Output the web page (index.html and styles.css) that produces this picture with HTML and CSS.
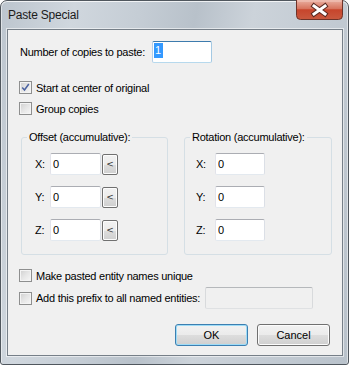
FILE: index.html
```html
<!DOCTYPE html>
<html lang="en">
<head>
    <meta charset="UTF-8">
    <title>Paste Special</title>
    <link rel="stylesheet" href="styles.css">
</head>
<body>
    <div class="window">
        <div class="titlebar">
            <span class="title">Paste Special</span>
            <div class="close">
                <svg width="47" height="20" viewBox="0 0 47 20">
                    <defs>
                        <linearGradient id="closegrad" x1="0" y1="0" x2="0" y2="1">
                            <stop offset="0" stop-color="#eab0a2"/>
                            <stop offset="0.45" stop-color="#d7735d"/>
                            <stop offset="0.5" stop-color="#c7452c"/>
                            <stop offset="1" stop-color="#c9593f"/>
                        </linearGradient>
                    </defs>
                    <path d="M0.5 0 V15.5 Q0.5 19.5 4.5 19.5 H42.5 Q46.5 19.5 46.5 15.5 V0" fill="url(#closegrad)" stroke="#6e3329"/>
                    <path d="M1.5 1 H45.5" stroke="#f3c9bf" stroke-width="1"/>
                    <path d="M18 6 L29 14 M29 6 L18 14" stroke="#5b2a22" stroke-width="5" stroke-linecap="square"/>
                    <path d="M18 6 L29 14 M29 6 L18 14" stroke="#ffffff" stroke-width="3" stroke-linecap="square"/>
                </svg>
            </div>
        </div>

        <div class="client">
            <div class="copies-row">
                <span class="copies-label">Number of copies to paste:</span>
                <div class="textbox copies"><span class="selected">1</span></div>
            </div>

            <div class="check-row first">
                <span class="checkbox">
                    <svg width="11" height="11" viewBox="0 0 11 11"><path d="M2.2 5.4 L4.5 8 L8.8 2" fill="none" stroke="#4c63a0" stroke-width="1.5"/></svg>
                </span>
                Start at center of original
            </div>
            <div class="check-row second">
                <span class="checkbox"></span>
                Group copies
            </div>

            <div class="groups">
                <div class="group offset">
                    <span class="group-title">Offset (accumulative):</span>
                    <div class="axis-row"><span class="axis">X:</span><input class="textbox axis-input" value="0"><button class="pick">&lt;</button></div>
                    <div class="axis-row"><span class="axis">Y:</span><input class="textbox axis-input" value="0"><button class="pick">&lt;</button></div>
                    <div class="axis-row"><span class="axis">Z:</span><input class="textbox axis-input" value="0"><button class="pick">&lt;</button></div>
                </div>
                <div class="group rotation">
                    <span class="group-title">Rotation (accumulative):</span>
                    <div class="axis-row"><span class="axis">X:</span><input class="textbox axis-input" value="0"></div>
                    <div class="axis-row"><span class="axis">Y:</span><input class="textbox axis-input" value="0"></div>
                    <div class="axis-row"><span class="axis">Z:</span><input class="textbox axis-input" value="0"></div>
                </div>
            </div>

            <div class="check-row unique">
                <span class="checkbox"></span>
                Make pasted entity names unique
            </div>
            <div class="prefix-row">
                <span class="checkbox"></span>
                <span>Add this prefix to all named entities:</span>
                <input class="textbox prefix" disabled>
            </div>

            <div class="buttons">
                <button class="btn default">OK</button>
                <button class="btn">Cancel</button>
            </div>
        </div>
    </div>
</body>
</html>
```

FILE: styles.css
```css
body {
    margin: 0;
    background: #ffffff;
    font-family: "Liberation Sans", Arial, sans-serif;
    font-size: 11px;
    color: #000000;
}

.window {
    width: 349px;
    height: 365px;
    box-sizing: border-box;
    border: 1px solid #50575e;
    border-radius: 7px 7px 3px 3px;
    background: linear-gradient(100deg, #bcc5ce 0%, #d0d7de 18%, #c5cdd5 34%, #b8c1ca 48%, #ccd3da 62%, #c3cbd3 80%, #b9c2cb 100%);
    box-shadow: inset 0 1px 0 rgba(255, 255, 255, 0.75), inset 1px 0 0 rgba(255, 255, 255, 0.5), inset -1px 0 0 rgba(255, 255, 255, 0.5);
    display: flex;
    flex-direction: column;
}

.titlebar {
    height: 28px;
    display: flex;
    align-items: flex-start;
    padding-left: 7px;
}

.title {
    margin-top: 7px;
    font-size: 12px;
    line-height: 15px;
    letter-spacing: -0.2px;
    color: #1b1b1b;
}

.close {
    margin-left: auto;
    margin-right: 5px;
    margin-top: -1px;
    height: 20px;
}

.close svg {
    display: block;
}

.client {
    margin: 0 5px 8px 6px;
    flex: 1;
    border: 1px solid #767f88;
    background: #f0f0f0;
    box-shadow: 0 0 0 1px rgba(255, 255, 255, 0.55);
    display: flex;
    flex-direction: column;
    letter-spacing: -0.25px;
}

.copies-row {
    display: flex;
    align-items: center;
    margin: 11px 0 0 12px;
    line-height: 13px;
}

.copies-label {
    width: 132px;
}

.textbox {
    box-sizing: border-box;
    height: 22px;
    border: 1px solid;
    border-color: #abadb3 #dbdfe6 #e3e9ef #e2e3ea;
    border-radius: 2px;
    background: #ffffff;
    font-family: "Liberation Sans", Arial, sans-serif;
    font-size: 11px;
    color: #000000;
    margin: 0;
    outline: none;
}

.copies {
    width: 60px;
    border-color: #3d7bad #a4c9e3 #b7d9ed #b5cfe7;
    padding: 1px 0 0 1px;
}

.selected {
    display: inline-block;
    background: #3399ff;
    color: #ffffff;
    line-height: 15px;
    padding: 0 2px 0 1px;
}

.check-row {
    display: flex;
    align-items: center;
    height: 13px;
    margin-left: 11px;
}

.check-row.first {
    margin-top: 18px;
}

.check-row.second {
    margin-top: 8px;
}

.check-row.unique {
    margin-top: 14px;
}

.checkbox {
    width: 13px;
    height: 13px;
    box-sizing: border-box;
    border: 1px solid #8e8f8f;
    background: linear-gradient(135deg, #cfcfcf 0%, #e6e6e6 50%, #f7f7f7 100%);
    box-shadow: inset 0 0 0 1px #f4f4f4;
    margin-right: 4px;
    flex-shrink: 0;
}

.checkbox svg {
    display: block;
}

.groups {
    display: flex;
    gap: 16px;
    margin: 22px 0 0 13px;
}

.group {
    position: relative;
    box-sizing: border-box;
    height: 118px;
    border: 1px solid #d5dfe5;
    border-radius: 3px;
    padding: 15px 0 0 13px;
    display: flex;
    flex-direction: column;
    gap: 11px;
}

.group.offset {
    width: 147px;
}

.group.rotation {
    width: 148px;
    padding-left: 11px;
}

.group-title {
    position: absolute;
    top: -8px;
    left: 5px;
    padding: 0 2px;
    background: #f0f0f0;
    line-height: 14px;
}

.axis-row {
    display: flex;
    align-items: center;
    height: 22px;
}

.axis {
    width: 15px;
}

.rotation .axis {
    width: 19px;
}

.axis-input {
    width: 51px;
    padding: 0 2px;
}

.rotation .axis-input {
    width: 50px;
}

.pick {
    box-sizing: border-box;
    width: 16px;
    height: 21px;
    margin-left: 1px;
    padding: 0;
    border: 1px solid #707070;
    border-radius: 2px;
    background: linear-gradient(#f2f2f2 0%, #ebebeb 50%, #dddddd 51%, #cfcfcf 100%);
    box-shadow: inset 0 0 0 1px #fcfcfc;
    font-family: "DejaVu Sans", sans-serif;
    font-size: 9px;
    color: #333333;
}

.prefix-row {
    display: flex;
    align-items: center;
    height: 22px;
    margin: 5px 0 0 11px;
}

.prefix {
    width: 108px;
    margin-left: auto;
    margin-right: 29px;
    background: #f0f0f0;
    border-color: #b5b8bb #d8dadc #dfe1e3 #d8dadc;
}

.buttons {
    display: flex;
    justify-content: flex-end;
    gap: 9px;
    margin: 15px 12px 0 0;
}

.btn {
    box-sizing: border-box;
    width: 73px;
    height: 22px;
    padding: 0;
    border: 1px solid #707070;
    border-radius: 3px;
    background: linear-gradient(#f2f2f2 0%, #ebebeb 50%, #dddddd 51%, #cfcfcf 100%);
    box-shadow: inset 0 0 0 1px #fcfcfc;
    font-family: "Liberation Sans", Arial, sans-serif;
    font-size: 11px;
    color: #000000;
}

.btn.default {
    border-color: #3c7fb1;
    box-shadow: inset 0 0 0 1px #9edcf7;
}
```
